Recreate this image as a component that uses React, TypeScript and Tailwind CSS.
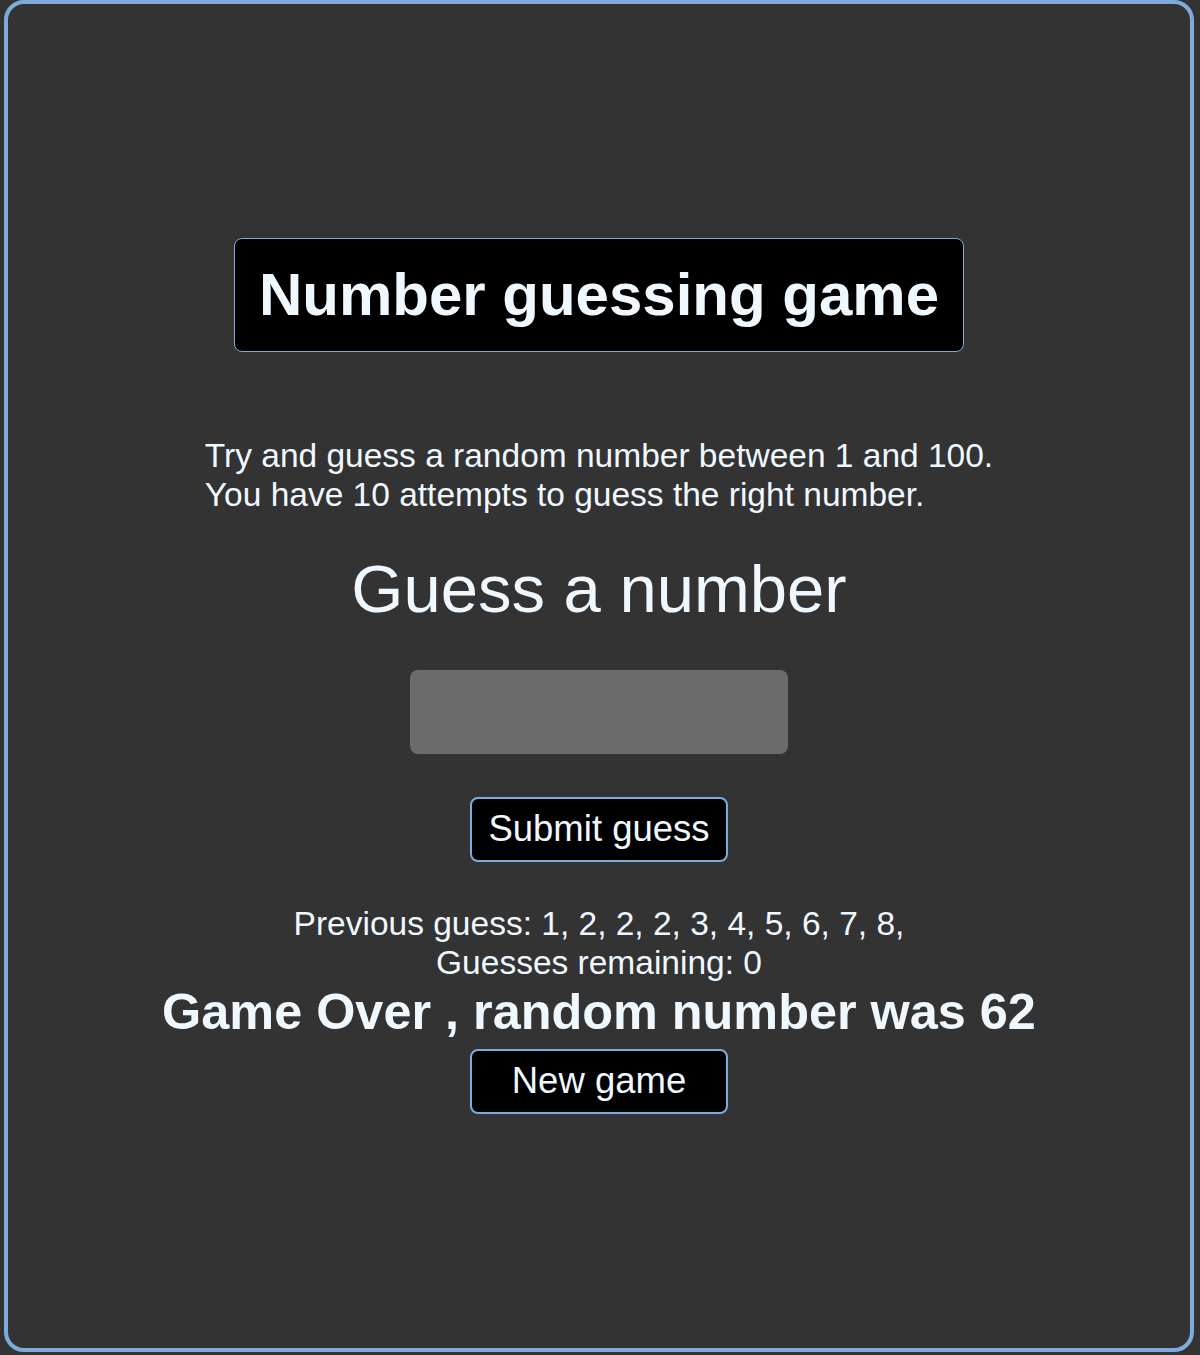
import { useState } from 'react';

export default function App() {
  const [guess, setGuess] = useState('');
  const previous = [1, 2, 2, 2, 3, 4, 5, 6, 7, 8];

  return (
    <div className="min-h-[1355px] w-full bg-[#333333] font-['Liberation_Sans',Arial,sans-serif] text-[#f0f8ff]">
      <div className="ml-[4px] flex h-[1352px] w-[1190px] flex-col items-center rounded-[20px] border-[4px] border-[#7eabdc] bg-[#333333]">
        <h1 className="mt-[234px] rounded-[8px] border border-[#7eabdc] bg-black px-[24px] py-[21px] text-[60px] font-bold leading-[70px]">
          Number guessing game
        </h1>

        <p className="mt-[85px] w-fit text-left text-[33.5px] leading-[38.5px]">
          Try and guess a random number between 1 and 100.
          <br />
          You have 10 attempts to guess the right number.
        </p>

        <h2 className="mt-[36px] text-[67px] leading-[77px]">Guess a number</h2>

        <input
          type="number"
          value={guess}
          onChange={(e) => setGuess(e.target.value)}
          disabled
          className="mt-[43px] h-[84px] w-[378px] rounded-[8px] border-0 bg-[#6b6b6b] px-4 text-[33px] text-[#f0f8ff] outline-none"
        />

        <button className="mt-[43px] h-[65px] w-[258px] rounded-[8px] border-2 border-[#7eabdc] bg-black text-[36.5px] leading-none">
          Submit guess
        </button>

        <div className="mt-[43px] text-center text-[33.5px] leading-[38.5px]">
          <p>Previous guess: {previous.map((n) => `${n}, `).join('')}</p>
          <p>Guesses remaining: 0</p>
        </div>

        <h3 className="mt-[1px] text-[50.4px] font-bold leading-[57.5px]">Game Over , random number was 62</h3>

        <button className="mt-[8.5px] h-[65px] w-[258px] rounded-[8px] border-2 border-[#7eabdc] bg-black text-[36.5px] leading-none">
          New game
        </button>
      </div>
    </div>
  );
}
